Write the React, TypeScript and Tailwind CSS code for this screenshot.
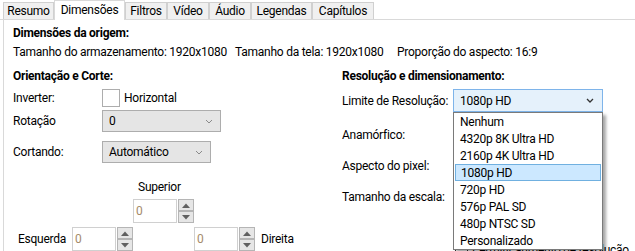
import React from "react";

function Chevron({ dark }: { dark?: boolean }) {
  return (
    <svg width="8" height="5" viewBox="0 0 8 5" className="block">
      <path
        d="M1 1 L4 4 L7 1"
        fill="none"
        stroke={dark ? "#333333" : "#8a8a8a"}
        strokeWidth={dark ? 1.3 : 1}
      />
    </svg>
  );
}

function Select({ value, w }: { value: string; w: string }) {
  return (
    <div
      className={`${w} h-[22px] border border-[#adadad] bg-[#e5e5e5] flex items-center justify-between pl-[6px] pr-[7px]`}
    >
      <span>{value}</span>
      <Chevron />
    </div>
  );
}

function Arrow({ up }: { up?: boolean }) {
  return (
    <div className="h-[12px] w-[16px] border border-[#b5b5b5] bg-[#e6e6e6] flex items-center justify-center">
      <svg width="8" height="5" viewBox="0 0 8 5" className="block">
        {up ? (
          <path d="M0 5 L4 0.5 L8 5 Z" fill="#606060" />
        ) : (
          <path d="M0 0 L4 4.5 L8 0 Z" fill="#606060" />
        )}
      </svg>
    </div>
  );
}

function Spin() {
  return (
    <div className="flex">
      <div className="w-[44px] h-[24px] border border-[#d0d0d0] bg-white flex items-center pl-[2px] text-[#a58a6a]">
        0
      </div>
      <div className="flex flex-col ml-[1px]">
        <Arrow up />
        <Arrow />
      </div>
    </div>
  );
}

const tabs: { label: string; w: string; active?: boolean }[] = [
  { label: "Resumo", w: "w-[51px]" },
  { label: "Dimensões", w: "w-[71px]", active: true },
  { label: "Filtros", w: "w-[42px]" },
  { label: "Vídeo", w: "w-[42px]" },
  { label: "Áudio", w: "w-[42px]" },
  { label: "Legendas", w: "w-[61px]" },
  { label: "Capítulos", w: "w-[62px]" },
];

const items = [
  "Nenhum",
  "4320p 8K Ultra HD",
  "2160p 4K Ultra HD",
  "1080p HD",
  "720p HD",
  "576p PAL SD",
  "480p NTSC SD",
  "Personalizado",
];

export default function App() {
  return (
    <div className="w-[635px] h-[251px] overflow-hidden bg-white text-black text-[12px] tracking-[-0.25px] font-[family-name:Roboto,sans-serif]">
      {/* Tabs */}
      <div className="h-[20px] flex items-end pl-[3px] border-b border-[#d9d9d9]">
        {tabs.map((t) =>
          t.active ? (
            <div
              key={t.label}
              className={`${t.w} h-[20px] -mb-[1px] bg-white border border-b-0 border-[#d9d9d9] flex items-start justify-center pt-[1px] leading-[16px] relative z-10`}
            >
              {t.label}
            </div>
          ) : (
            <div
              key={t.label}
              className={`${t.w} h-[17px] bg-[#f0f0f0] border border-b-0 border-[#d0d0d0] flex items-center justify-center leading-[16px]`}
            >
              {t.label}
            </div>
          )
        )}
      </div>

      {/* Body */}
      <div className="ml-[3px] h-[231px] border-l border-[#d9d9d9] pl-[9px] pt-[5px]">
        <div className="font-bold leading-[16px]">Dimensões da origem:</div>
        <div className="flex mt-[3px] leading-[16px]">
          <span className="w-[222px]">Tamanho do armazenamento: 1920x1080</span>
          <span className="w-[162px]">Tamanho da tela: 1920x1080</span>
          <span>Proporção do aspecto: 16:9</span>
        </div>

        <div className="flex mt-[8px]">
          {/* Left column */}
          <div className="w-[329px] flex flex-col">
            <div className="font-bold leading-[16px]">Orientação e Corte:</div>
            <div className="mt-[5px] h-[18px] flex items-center">
              <span className="w-[89px]">Inverter:</span>
              <div className="w-[18px] h-[18px] border border-[#adadad] bg-white" />
              <span className="ml-[4px]">Horizontal</span>
            </div>
            <div className="mt-[3px] h-[22px] flex items-center">
              <span className="w-[89px]">Rotação</span>
              <Select value="0" w="w-[119px]" />
            </div>
            <div className="mt-[9px] h-[22px] flex items-center">
              <span className="w-[89px]">Cortando:</span>
              <Select value="Automático" w="w-[109px]" />
            </div>
            <div className="mt-[16px] ml-[125px] leading-[16px]">Superior</div>
            <div className="mt-[4px] ml-[120px]">
              <Spin />
            </div>
            <div className="mt-[4px] flex items-start">
              <span className="ml-[5px] w-[54px] h-[24px] flex items-center">Esquerda</span>
              <Spin />
              <div className="ml-[61px]">
                <Spin />
              </div>
              <span className="ml-[6px] h-[24px] flex items-center">Direita</span>
            </div>
          </div>

          {/* Right column */}
          <div className="flex flex-col">
            <div className="font-bold leading-[16px]">Resolução e dimensionamento:</div>
            <div className="mt-[5px] h-[23px] flex items-center">
              <span className="w-[111px]">Limite de Resolução:</span>
              <div className="relative">
                <div className="w-[150px] h-[23px] border border-[#7eb4ea] bg-[#e5f1fb] flex items-center justify-between pl-[6px] pr-[8px]">
                  <span>1080p HD</span>
                  <Chevron dark />
                </div>
                <div className="absolute left-0 top-[23px] w-[150px] border border-[#7a7a7a] bg-white shadow-[3px_3px_3px_rgba(0,0,0,0.35)] z-20">
                  {items.map((it) =>
                    it === "1080p HD" ? (
                      <div
                        key={it}
                        className="h-[17px] mx-[1px] border border-[#70b0e0] bg-[#cce8ff] pl-[5px] flex items-center"
                      >
                        {it}
                      </div>
                    ) : (
                      <div key={it} className="h-[17px] pl-[6px] flex items-center">
                        {it}
                      </div>
                    )
                  )}
                </div>
              </div>
            </div>
            <div className="mt-[15px] leading-[16px]">Anamórfico:</div>
            <div className="mt-[15px] leading-[16px]">Aspecto do pixel:</div>
            <div className="mt-[15px] leading-[16px]">Tamanho da escala:</div>
            <div className="mt-[37px] ml-[113px] flex items-center leading-[16px]">
              <div className="w-[13px] h-[13px] border border-[#333] bg-white mr-[4px]" />
              <span>Permitir aumento de resolução</span>
            </div>
          </div>
        </div>
      </div>
    </div>
  );
}
